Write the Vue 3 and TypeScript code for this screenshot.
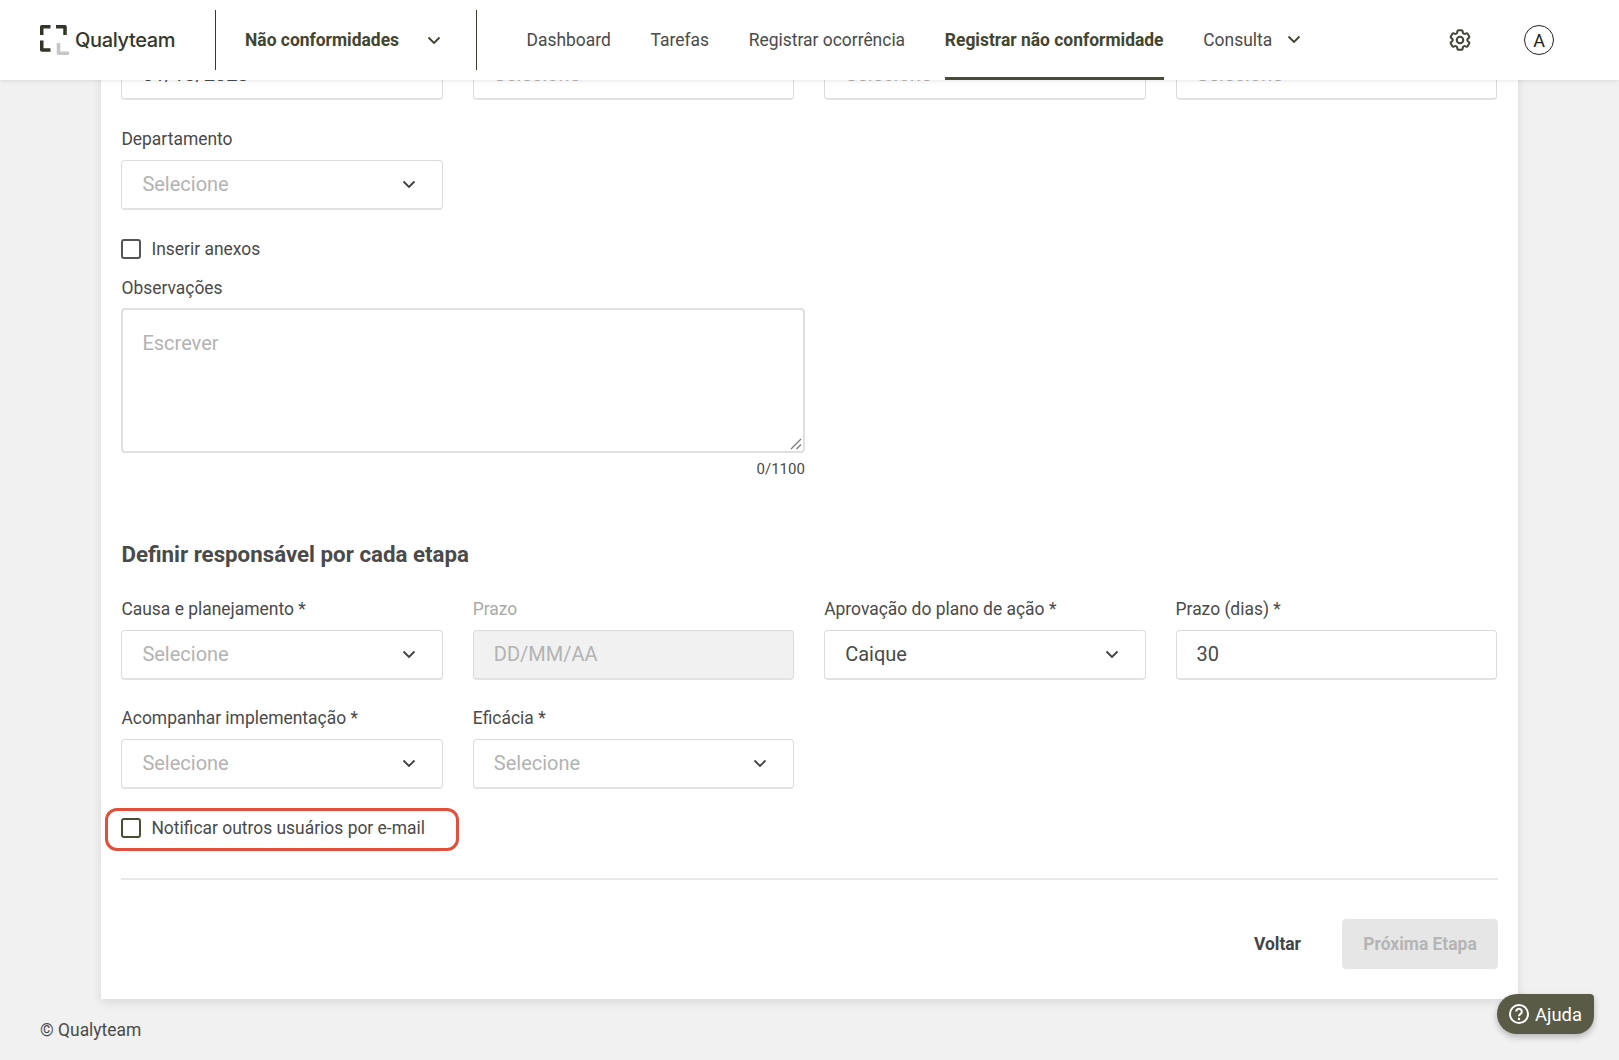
<script setup lang="ts">
const navItems = [
  { label: "Dashboard" },
  { label: "Tarefas" },
  { label: "Registrar ocorrência" },
  { label: "Registrar não conformidade", active: true },
  { label: "Consulta", caret: true },
];
</script>

<template>
  <div class="page">
    <header class="topbar">
      <div class="brand">
        <svg class="logo" width="29" height="31" viewBox="0 0 29 31" fill="none" stroke-linejoin="round">
          <path d="M10.5 1.75H1.75V10" stroke="#33352a" stroke-width="3.5" />
          <path d="M16 1.75H25V10" stroke="#33352a" stroke-width="3.5" />
          <path d="M1.75 15.5V25H10.5" stroke="#33352a" stroke-width="3.5" />
          <path d="M18.5 18V28.2H29" stroke="#c6c6c8" stroke-width="3.5" />
        </svg>
        <span class="brand-name">Qualyteam</span>
      </div>
      <div class="module">
        <span class="module-name">Não conformidades</span>
        <svg class="chev" width="14" height="9" viewBox="0 0 14 9" fill="none">
          <path d="M1.5 1.5L7 7L12.5 1.5" stroke="#3f4132" stroke-width="1.8" />
        </svg>
      </div>
      <nav class="nav">
        <a v-for="item in navItems" :key="item.label" class="nav-item" :class="{ active: item.active }">
          {{ item.label }}
          <svg v-if="item.caret" class="chev nav-caret" width="14" height="9" viewBox="0 0 14 9" fill="none">
            <path d="M1.5 1.5L7 7L12.5 1.5" stroke="#3f4132" stroke-width="1.8" />
          </svg>
        </a>
      </nav>
      <div class="tools">
        <svg class="gear" width="26" height="26" viewBox="0 0 24 24" fill="none" stroke="#45463a" stroke-width="1.9" stroke-linejoin="round">
          <path d="M9.594 3.94c.09-.542.56-.94 1.11-.94h2.593c.55 0 1.02.398 1.11.94l.213 1.281c.063.374.313.686.645.87.074.04.147.083.22.127.324.196.72.257 1.075.124l1.217-.456a1.125 1.125 0 011.37.49l1.296 2.247a1.125 1.125 0 01-.26 1.431l-1.003.827c-.293.24-.438.613-.431.992a6.759 6.759 0 010 .255c-.007.378.138.75.43.99l1.005.828c.424.35.534.954.26 1.43l-1.298 2.247a1.125 1.125 0 01-1.369.491l-1.217-.456c-.355-.133-.75-.072-1.076.124a6.57 6.57 0 01-.22.128c-.331.183-.581.495-.644.869l-.213 1.28c-.09.543-.56.941-1.11.941h-2.594c-.55 0-1.02-.398-1.11-.94l-.213-1.281c-.062-.374-.312-.686-.644-.87a6.52 6.52 0 01-.22-.127c-.325-.196-.72-.257-1.076-.124l-1.217.456a1.125 1.125 0 01-1.369-.49l-1.297-2.247a1.125 1.125 0 01.26-1.431l1.004-.827c.292-.24.437-.613.43-.992a6.932 6.932 0 010-.255c.007-.378-.138-.75-.43-.99l-1.004-.828a1.125 1.125 0 01-.26-1.43l1.297-2.247a1.125 1.125 0 011.37-.491l1.216.456c.356.133.751.072 1.076-.124.072-.044.146-.087.22-.128.332-.183.582-.495.644-.869l.214-1.281z" />
          <circle cx="12" cy="12" r="3" />
        </svg>
        <div class="avatar">A</div>
      </div>
    </header>

    <main class="card">
      <div class="grid">
        <div class="input">01/10/2023</div>
        <div class="input placeholder">Selecione</div>
        <div class="input placeholder">Selecione</div>
        <div class="input placeholder">Selecione</div>
      </div>

      <div class="grid dept">
        <div class="field">
          <label class="label">Departamento</label>
          <div class="input placeholder">
            Selecione
            <svg class="chev" width="14" height="9" viewBox="0 0 14 9" fill="none">
              <path d="M1.5 1.5L7 7L12.5 1.5" stroke="#3f3f3f" stroke-width="1.8" />
            </svg>
          </div>
        </div>
      </div>

      <div class="check attach">
        <span class="box grey"></span>
        <span>Inserir anexos</span>
      </div>

      <div class="notes">
        <label class="label notes-label">Observações</label>
        <div class="textarea placeholder">
          Escrever
          <svg class="grip" width="12" height="12" viewBox="0 0 12 12" fill="none">
            <path d="M1 11L11 1M6.5 11L11 6.5" stroke="#777" stroke-width="1.2" />
          </svg>
        </div>
        <div class="counter">0/1100</div>
      </div>

      <h2 class="title">Definir responsável por cada etapa</h2>

      <div class="grid rows">
        <div class="field">
          <label class="label">Causa e planejamento *</label>
          <div class="input placeholder">
            Selecione
            <svg class="chev" width="14" height="9" viewBox="0 0 14 9" fill="none">
              <path d="M1.5 1.5L7 7L12.5 1.5" stroke="#3f3f3f" stroke-width="1.8" />
            </svg>
          </div>
        </div>
        <div class="field">
          <label class="label muted">Prazo</label>
          <div class="input placeholder disabled">DD/MM/AA</div>
        </div>
        <div class="field">
          <label class="label">Aprovação do plano de ação *</label>
          <div class="input">
            Caique
            <svg class="chev" width="14" height="9" viewBox="0 0 14 9" fill="none">
              <path d="M1.5 1.5L7 7L12.5 1.5" stroke="#3f3f3f" stroke-width="1.8" />
            </svg>
          </div>
        </div>
        <div class="field">
          <label class="label">Prazo (dias) *</label>
          <div class="input">30</div>
        </div>
        <div class="field">
          <label class="label">Acompanhar implementação *</label>
          <div class="input placeholder">
            Selecione
            <svg class="chev" width="14" height="9" viewBox="0 0 14 9" fill="none">
              <path d="M1.5 1.5L7 7L12.5 1.5" stroke="#3f3f3f" stroke-width="1.8" />
            </svg>
          </div>
        </div>
        <div class="field">
          <label class="label">Eficácia *</label>
          <div class="input placeholder">
            Selecione
            <svg class="chev" width="14" height="9" viewBox="0 0 14 9" fill="none">
              <path d="M1.5 1.5L7 7L12.5 1.5" stroke="#3f3f3f" stroke-width="1.8" />
            </svg>
          </div>
        </div>
      </div>

      <div class="check notify">
        <span class="box"></span>
        <span>Notificar outros usuários por e-mail</span>
        <span class="marker"></span>
      </div>

      <div class="divider"></div>

      <div class="actions">
        <button class="btn-back">Voltar</button>
        <button class="btn-next">Próxima Etapa</button>
      </div>
    </main>

    <footer class="footer">© Qualyteam</footer>

    <button class="help">
      <svg width="22" height="22" viewBox="0 0 22 22" fill="none">
        <circle cx="11" cy="11" r="9" stroke="#fff" stroke-width="2" />
        <path d="M8.2 8.6a2.8 2.8 0 1 1 4.4 2.3c-1 .7-1.6 1.2-1.6 2.3" stroke="#fff" stroke-width="2" />
        <circle cx="11" cy="16" r="1.2" fill="#fff" />
      </svg>
      Ajuda
    </button>
  </div>
</template>

<style>
html,
body {
  margin: 0;
  overflow: hidden;
  background: #f1f1f1;
}
</style>

<style scoped>
.page {
  position: relative;
  height: 1060px;
  overflow: hidden;
  background: #f1f1f1;
  font-family: Roboto, "Noto Sans", sans-serif;
  color: #4a4a4a;
}
.topbar {
  position: absolute;
  top: 0;
  left: 0;
  right: 0;
  z-index: 2;
  height: 80px;
  display: flex;
  align-items: center;
  background: #fff;
  box-shadow: 0 1px 4px rgba(0, 0, 0, 0.1);
}
.brand {
  width: 216px;
  box-sizing: border-box;
  padding-left: 40px;
  display: flex;
  align-items: center;
  gap: 6px;
  border-right: 1px solid #3a3a32;
  height: 60px;
}
.logo {
  flex: none;
}
.brand-name {
  font-family: Inter, sans-serif;
  font-size: 20px;
  font-weight: 500;
  color: #35372b;
  letter-spacing: -0.35px;
}
.module {
  width: 261px;
  height: 60px;
  box-sizing: border-box;
  padding-left: 29px;
  display: flex;
  align-items: center;
  border-right: 1px solid #3a3a32;
}
.module-name {
  font-size: 17.45px;
  font-weight: 700;
  color: #43452f;
  width: 182px;
  white-space: nowrap;
}
.nav {
  display: flex;
  align-items: stretch;
  gap: 39.7px;
  margin-left: 49.5px;
  height: 80px;
}
.nav-item {
  display: flex;
  align-items: center;
  font-size: 17.45px;
  color: #4a4a4a;
  box-sizing: border-box;
  padding-top: 2px;
  border-bottom: 3px solid transparent;
}
.nav-item.active {
  font-weight: 700;
  color: #43452f;
  border-bottom-color: #4a4c35;
}
.nav-caret {
  margin-left: 15px;
}
.tools {
  margin-left: auto;
  display: flex;
  align-items: center;
  gap: 51px;
  padding-right: 65px;
}
.gear {
  display: block;
}
.avatar {
  width: 30px;
  height: 30px;
  box-sizing: border-box;
  border: 1px solid #222;
  border-radius: 50%;
  display: flex;
  align-items: center;
  justify-content: center;
  font-size: 18px;
  color: #222;
}
.card {
  width: 1417px;
  height: 999px;
  margin-left: 101px;
  box-sizing: border-box;
  padding: 50px 20px 0 20.4px;
  background: #fff;
  box-shadow: 0 3px 10px rgba(0, 0, 0, 0.1);
}
.grid {
  display: grid;
  grid-template-columns: repeat(4, 321.4px);
  column-gap: 30px;
}
.input {
  height: 50px;
  box-sizing: border-box;
  padding: 0 26px 1px 20px;
  display: flex;
  align-items: center;
  justify-content: space-between;
  border: 1px solid #dcdcdc;
  border-bottom: 2px solid #e2e2e2;
  border-radius: 4px;
  font-size: 20px;
  color: #4a4a4a;
  background: #fff;
}
.placeholder {
  color: #b3b3b3;
}
.disabled {
  background: #f1f1f1;
}
.label {
  display: block;
  font-size: 17.45px;
  line-height: 22px;
  margin-bottom: 10px;
  color: #4a4a4a;
}
.notes-label {
  margin-bottom: 9px;
}
.muted {
  color: #aaa;
}
.dept {
  margin-top: 28px;
}
.check {
  display: flex;
  align-items: center;
  gap: 10px;
  font-size: 17.45px;
  line-height: 20px;
}
.box {
  width: 20px;
  height: 20px;
  box-sizing: border-box;
  border: 2px solid #4a4c35;
  border-radius: 3px;
}
.box.grey {
  border-color: #555;
}
.attach {
  margin-top: 29px;
}
.notes {
  margin-top: 18px;
  width: 683.5px;
}
.textarea {
  position: relative;
  height: 145px;
  box-sizing: border-box;
  padding: 21px 19px;
  border: 2px solid #e0e0e0;
  border-radius: 4px;
  font-size: 20px;
}
.grip {
  position: absolute;
  right: 1px;
  bottom: 1px;
}
.counter {
  margin-top: 7px;
  text-align: right;
  font-size: 15px;
  line-height: 18px;
}
.title {
  margin: 61px 0 0;
  font-size: 22.3px;
  line-height: 30px;
  font-weight: 700;
  color: #4a4a4a;
}
.rows {
  margin-top: 29px;
  row-gap: 27px;
}
.notify {
  position: relative;
  margin-top: 29px;
}
.marker {
  position: absolute;
  left: -16.4px;
  top: -10px;
  width: 354px;
  height: 43px;
  box-sizing: border-box;
  border: 3px solid #e0503a;
  border-radius: 12px;
}
.divider {
  margin-top: 40px;
  height: 2px;
  background: #e8e8e8;
}
.actions {
  margin-top: 39px;
  display: flex;
  justify-content: flex-end;
  align-items: center;
  gap: 41px;
}
.btn-back,
.btn-next {
  border: 0;
  padding: 0;
  font-family: inherit;
  font-size: 17.45px;
  font-weight: 700;
  background: none;
}
.btn-back {
  color: #444;
}
.btn-next {
  width: 156px;
  height: 50px;
  border-radius: 4px;
  background: #e6e6e6;
  color: #b5b5b5;
}
.footer {
  position: absolute;
  left: 40px;
  top: 1019px;
  font-size: 17.45px;
  line-height: 22px;
  color: #4a4a4a;
}
.help {
  position: absolute;
  left: 1497px;
  top: 994px;
  width: 97px;
  height: 40px;
  box-sizing: border-box;
  padding: 0 0 0 11px;
  display: flex;
  align-items: center;
  gap: 5px;
  border: 0;
  border-radius: 20px 4px 18px 20px;
  background: #5a5b47;
  color: #fff;
  font-family: inherit;
  font-size: 18.4px;
  box-shadow: 0 3px 6px rgba(0, 0, 0, 0.25);
}
</style>
